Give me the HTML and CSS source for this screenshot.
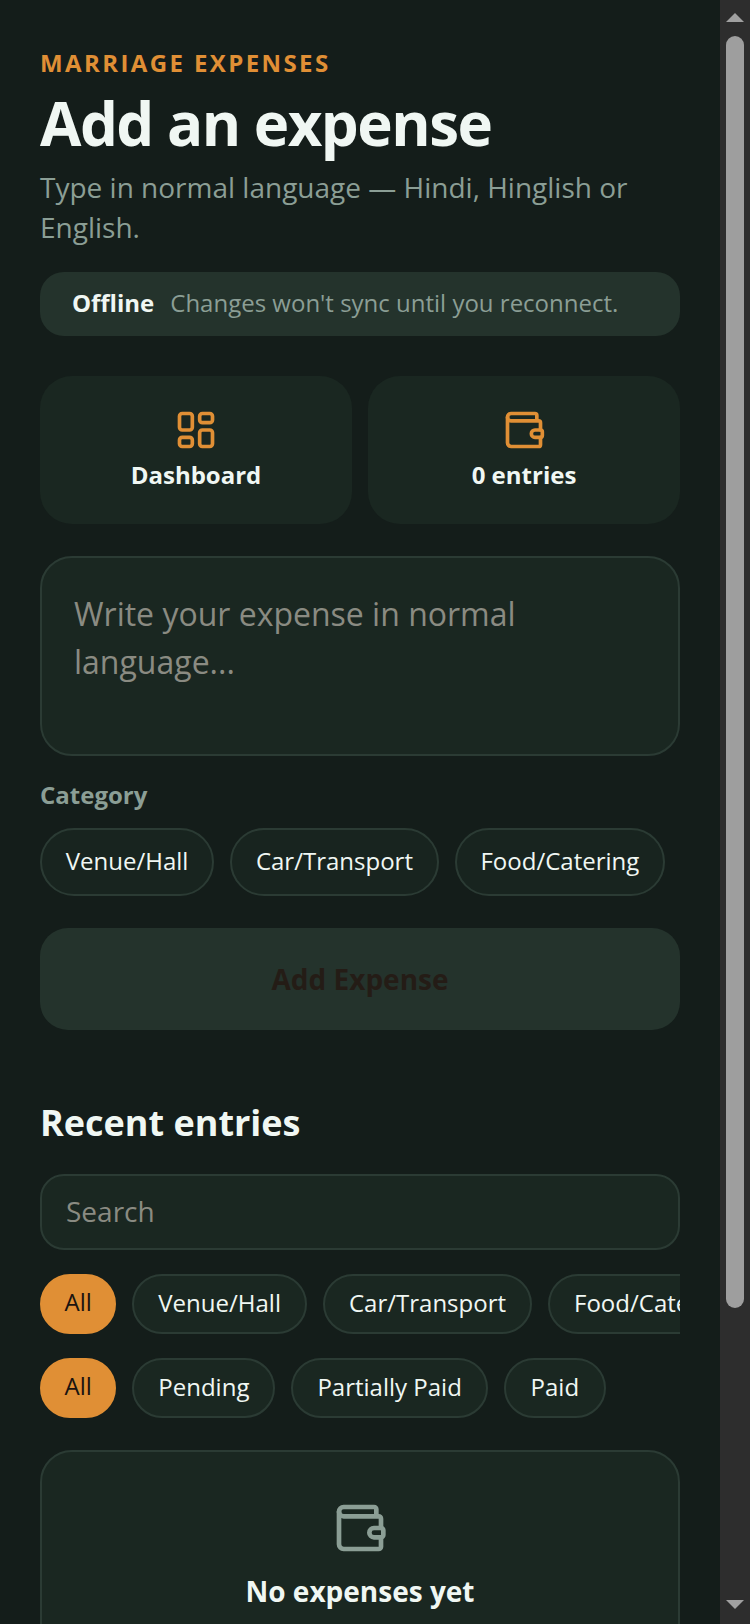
FILE: index.html
```html
<!DOCTYPE html>
<html lang="en">
<head>
  <meta charset="UTF-8">
  <meta name="viewport" content="width=device-width, initial-scale=1.0">
  <title>Add an expense</title>
  <link rel="stylesheet" href="styles.css">
</head>
<body>
  <div class="app">
    <main class="page">
      <p class="eyebrow">MARRIAGE EXPENSES</p>
      <h1 class="title">Add an expense</h1>
      <p class="subtitle">Type in normal language — Hindi, Hinglish or English.</p>

      <div class="offline">
        <strong>Offline</strong>
        <span>Changes won't sync until you reconnect.</span>
      </div>

      <div class="actions">
        <div class="action">
          <svg class="icon" viewBox="0 0 24 24" fill="none" stroke="currentColor" stroke-width="2" stroke-linecap="round" stroke-linejoin="round">
            <rect x="3" y="3" width="7" height="9" rx="1.5"/>
            <rect x="14" y="3" width="7" height="5" rx="1.5"/>
            <rect x="14" y="12" width="7" height="9" rx="1.5"/>
            <rect x="3" y="16" width="7" height="5" rx="1.5"/>
          </svg>
          <span>Dashboard</span>
        </div>
        <div class="action">
          <svg class="icon" viewBox="0 0 24 24" fill="none" stroke="currentColor" stroke-width="2" stroke-linecap="round" stroke-linejoin="round">
            <path d="M21 12V8a1 1 0 0 0-1-1H5a2 2 0 0 1 0-4h13a1 1 0 0 1 1 1v3"/>
            <path d="M3 5v14a2 2 0 0 0 2 2h15a1 1 0 0 0 1-1v-4"/>
            <path d="M18 12h3a1 1 0 0 1 1 1v2a1 1 0 0 1-1 1h-3a2 2 0 0 1 0-4z"/>
          </svg>
          <span>0 entries</span>
        </div>
      </div>

      <div class="note">Write your expense in normal language...</div>

      <div class="label">Category</div>
      <div class="chips chips-form">
        <span class="chip">Venue/Hall</span>
        <span class="chip">Car/Transport</span>
        <span class="chip">Food/Catering</span>
      </div>

      <div class="submit">Add Expense</div>

      <h2 class="section-title">Recent entries</h2>
      <div class="search">Search</div>

      <div class="chips filter">
        <span class="chip active">All</span>
        <span class="chip">Venue/Hall</span>
        <span class="chip">Car/Transport</span>
        <span class="chip">Food/Catering</span>
      </div>
      <div class="chips filter">
        <span class="chip active">All</span>
        <span class="chip">Pending</span>
        <span class="chip">Partially Paid</span>
        <span class="chip chip-min">Paid</span>
      </div>

      <div class="empty">
        <svg class="empty-icon" viewBox="0 0 24 24" fill="none" stroke="currentColor" stroke-width="2" stroke-linecap="round" stroke-linejoin="round">
          <path d="M21 12V8a1 1 0 0 0-1-1H5a2 2 0 0 1 0-4h13a1 1 0 0 1 1 1v3"/>
          <path d="M3 5v14a2 2 0 0 0 2 2h15a1 1 0 0 0 1-1v-4"/>
          <path d="M18 12h3a1 1 0 0 1 1 1v2a1 1 0 0 1-1 1h-3a2 2 0 0 1 0-4z"/>
        </svg>
        <div class="empty-title">No expenses yet</div>
      </div>
    </main>

    <div class="scrollbar">
      <div class="arrow-up"></div>
      <div class="thumb"></div>
      <div class="arrow-down"></div>
    </div>
  </div>
</body>
</html>
```
FILE: styles.css
```css
* {
  box-sizing: border-box;
}
html, body {
  margin: 0;
  padding: 0;
  height: 1624px;
  overflow: hidden;
  background-color: #141d1a;
}
body {
  font-family: "Open Sans", sans-serif;
  color: #f0f7f3;
}
.app {
  display: flex;
  height: 1624px;
  overflow: hidden;
}
.page {
  width: 720px;
  flex: none;
  height: 1624px;
  overflow: hidden;
  padding: 47px 40px 0;
}
.eyebrow {
  margin: 0;
  color: #e08f35;
  font-size: 24px;
  line-height: 32px;
  font-weight: 700;
  letter-spacing: 2.4px;
}
.title {
  margin: 8px 0 0;
  font-size: 60px;
  line-height: 72px;
  font-weight: 700;
  letter-spacing: -1.5px;
}
.subtitle {
  margin: 8px 0 0;
  color: #8b9e95;
  font-size: 28px;
  line-height: 40px;
}
.offline {
  display: flex;
  align-items: center;
  gap: 16px;
  height: 64px;
  margin-top: 25px;
  padding: 0 32px 4px;
  background-color: #24332c;
  border-radius: 24px;
  font-size: 24px;
  color: #8b9e95;
}
.offline strong {
  color: #f0f7f3;
  font-weight: 700;
}
.actions {
  display: flex;
  gap: 16px;
  margin-top: 40px;
}
.action {
  flex: 1;
  display: flex;
  flex-direction: column;
  align-items: center;
  justify-content: center;
  gap: 6px;
  height: 148px;
  padding-bottom: 2px;
  background-color: #1a2721;
  border-radius: 32px;
  font-size: 24px;
  font-weight: 700;
}
.icon {
  width: 44px;
  height: 44px;
  color: #e08f35;
}
.note {
  height: 200px;
  margin-top: 32px;
  padding: 32px;
  background-color: #1a2721;
  border: 2px solid #2b3b34;
  border-radius: 32px;
  color: #8a8b82;
  font-size: 32px;
  line-height: 48px;
}
.label {
  margin-top: 23px;
  color: #8b9e95;
  font-size: 24px;
  line-height: 32px;
  font-weight: 700;
}
.chips {
  display: flex;
  gap: 16px;
  overflow: hidden;
}
.chips-form {
  margin-top: 17px;
}
.chip {
  flex: none;
  display: flex;
  align-items: center;
  justify-content: center;
  height: 60px;
  padding: 0 24px 4px;
  background-color: #1a2721;
  border: 2px solid #2b3b34;
  border-radius: 40px;
  font-size: 24px;
}
.chip-min {
  min-width: 102px;
}
.chips-form .chip {
  height: 68px;
  padding: 0 23.75px 4px;
  background-color: #18241f;
}
.chip.active {
  padding: 0 22.5px 6px;
  background-color: #e08f35;
  border-color: #e08f35;
  color: #1a1410;
}
.submit {
  display: flex;
  align-items: center;
  justify-content: center;
  height: 102px;
  margin-top: 32px;
  background-color: #24332c;
  border-radius: 28px;
  color: #241c16;
  font-size: 28px;
  font-weight: 700;
}
.section-title {
  margin: 67px 0 0;
  font-size: 36px;
  line-height: 52px;
  font-weight: 700;
}
.search {
  display: flex;
  align-items: center;
  height: 76px;
  margin-top: 25px;
  padding: 0 24px 2px;
  background-color: #1a2721;
  border: 2px solid #2b3b34;
  border-radius: 24px;
  color: #8a8b82;
  font-size: 28px;
}
.filter {
  margin-top: 24px;
}
.empty {
  display: flex;
  flex-direction: column;
  align-items: center;
  height: 240px;
  margin-top: 32px;
  padding-top: 48px;
  background-color: #1a2721;
  border: 2px solid #2b3b34;
  border-radius: 32px;
}
.empty-icon {
  width: 56px;
  height: 56px;
  color: #8b9e95;
}
.empty-title {
  margin-top: 15px;
  font-size: 28px;
  line-height: 40px;
  font-weight: 700;
}
.scrollbar {
  width: 30px;
  flex: none;
  display: flex;
  flex-direction: column;
  align-items: center;
  height: 1624px;
  background-color: #2d2d2d;
}
.arrow-up {
  flex: none;
  width: 0;
  height: 0;
  margin-top: 13px;
  border-left: 9px solid transparent;
  border-right: 9px solid transparent;
  border-bottom: 9px solid #a0a0a0;
}
.thumb {
  flex: none;
  width: 18px;
  height: 1272px;
  margin-top: 14px;
  background-color: #9e9e9e;
  border-radius: 9px;
}
.arrow-down {
  flex: none;
  width: 0;
  height: 0;
  margin-top: 292px;
  border-left: 9px solid transparent;
  border-right: 9px solid transparent;
  border-top: 9px solid #a0a0a0;
}
```
